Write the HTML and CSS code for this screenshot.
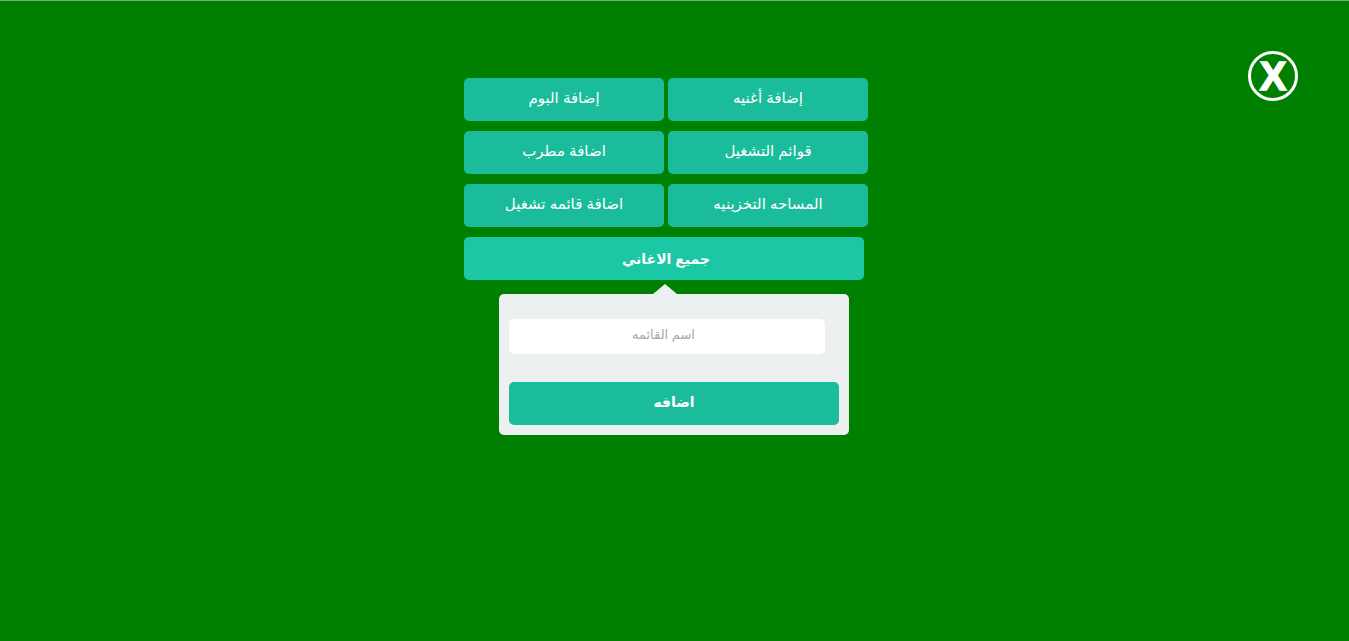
FILE: index.html
```html
<!DOCTYPE html>
<html lang="ar">
<head>
    <meta charset="UTF-8">
    <meta name="viewport" content="width=device-width, initial-scale=1.0">
    <title>إضافة</title>
    <link rel="stylesheet" href="styles.css">
</head>
<body>
    <!-- Close button -->
    <button class="close-btn" title="Close">X</button>

    <div class="menu">
        <div class="menu-grid" dir="rtl">
            <button class="menu-btn">إضافة أغنيه</button>
            <button class="menu-btn">إضافة البوم</button>
            <button class="menu-btn">قوائم التشغيل</button>
            <button class="menu-btn">اضافة مطرب</button>
            <button class="menu-btn">المساحه التخزينيه</button>
            <button class="menu-btn">اضافة قائمه تشغيل</button>
        </div>

        <button class="menu-btn menu-btn-wide">جميع الاغاني</button>

        <!-- Add playlist popover -->
        <div class="popover">
            <input class="popover-input" type="text" dir="rtl" placeholder="اسم القائمه">
            <button class="popover-btn">اضافه</button>
        </div>
    </div>
</body>
</html>
```

FILE: styles.css
```css
body {
    margin: 0;
    min-height: 640px;
    background: #008000;
    border-top: 1px solid #7fa77f;
    font-family: "Liberation Sans", "DejaVu Sans", sans-serif;
    overflow: hidden;
}

button {
    font-family: inherit;
    border: none;
    cursor: pointer;
}

/* Close button */
.close-btn {
    position: absolute;
    top: 51px;
    right: 51px;
    width: 50px;
    height: 50px;
    box-sizing: border-box;
    padding: 0;
    border: 3px solid #fff;
    border-radius: 50%;
    background: none;
    color: #fff;
    font-size: 40px;
    font-weight: bold;
    line-height: 44px;
    -webkit-text-stroke: 1.5px #fff;
}

/* Menu */
.menu {
    width: 404px;
    margin-left: 464px;
    padding-top: 77px;
}

.menu-grid {
    display: grid;
    grid-template-columns: 200px 200px;
    column-gap: 4px;
    row-gap: 10px;
}

.menu-btn {
    display: block;
    height: 43px;
    padding: 0 0 4px;
    background: #1abc9c;
    border-radius: 5px;
    color: #fff;
    font-size: 15px;
}

.menu-btn-wide {
    width: 400px;
    margin-top: 10px;
    padding: 0 0 0 4px;
    background: #1cc7a5;
    font-size: 14px;
    font-weight: bold;
}

/* Popover */
.popover {
    position: relative;
    width: 330px;
    margin: 14px 0 0 35px;
    padding: 25px 10px 10px;
    background: #ecf0f1;
    border-radius: 5px;
}

.popover::before {
    content: "";
    position: absolute;
    top: -10px;
    left: 154px;
    border-left: 12px solid transparent;
    border-right: 12px solid transparent;
    border-bottom: 10px solid #ecf0f1;
}

.popover-input {
    display: block;
    width: 316px;
    height: 35px;
    box-sizing: border-box;
    padding: 0 17px 4px 10px;
    background: #fff;
    border: none;
    border-radius: 5px;
    font-family: inherit;
    font-size: 13px;
    text-align: center;
}

.popover-input::placeholder {
    color: #aaa;
}

.popover-btn {
    display: block;
    width: 330px;
    height: 43px;
    margin-top: 28px;
    padding: 0 0 4px;
    background: #1abc9c;
    border-radius: 5px;
    color: #fff;
    font-size: 14px;
    font-weight: bold;
}
```
